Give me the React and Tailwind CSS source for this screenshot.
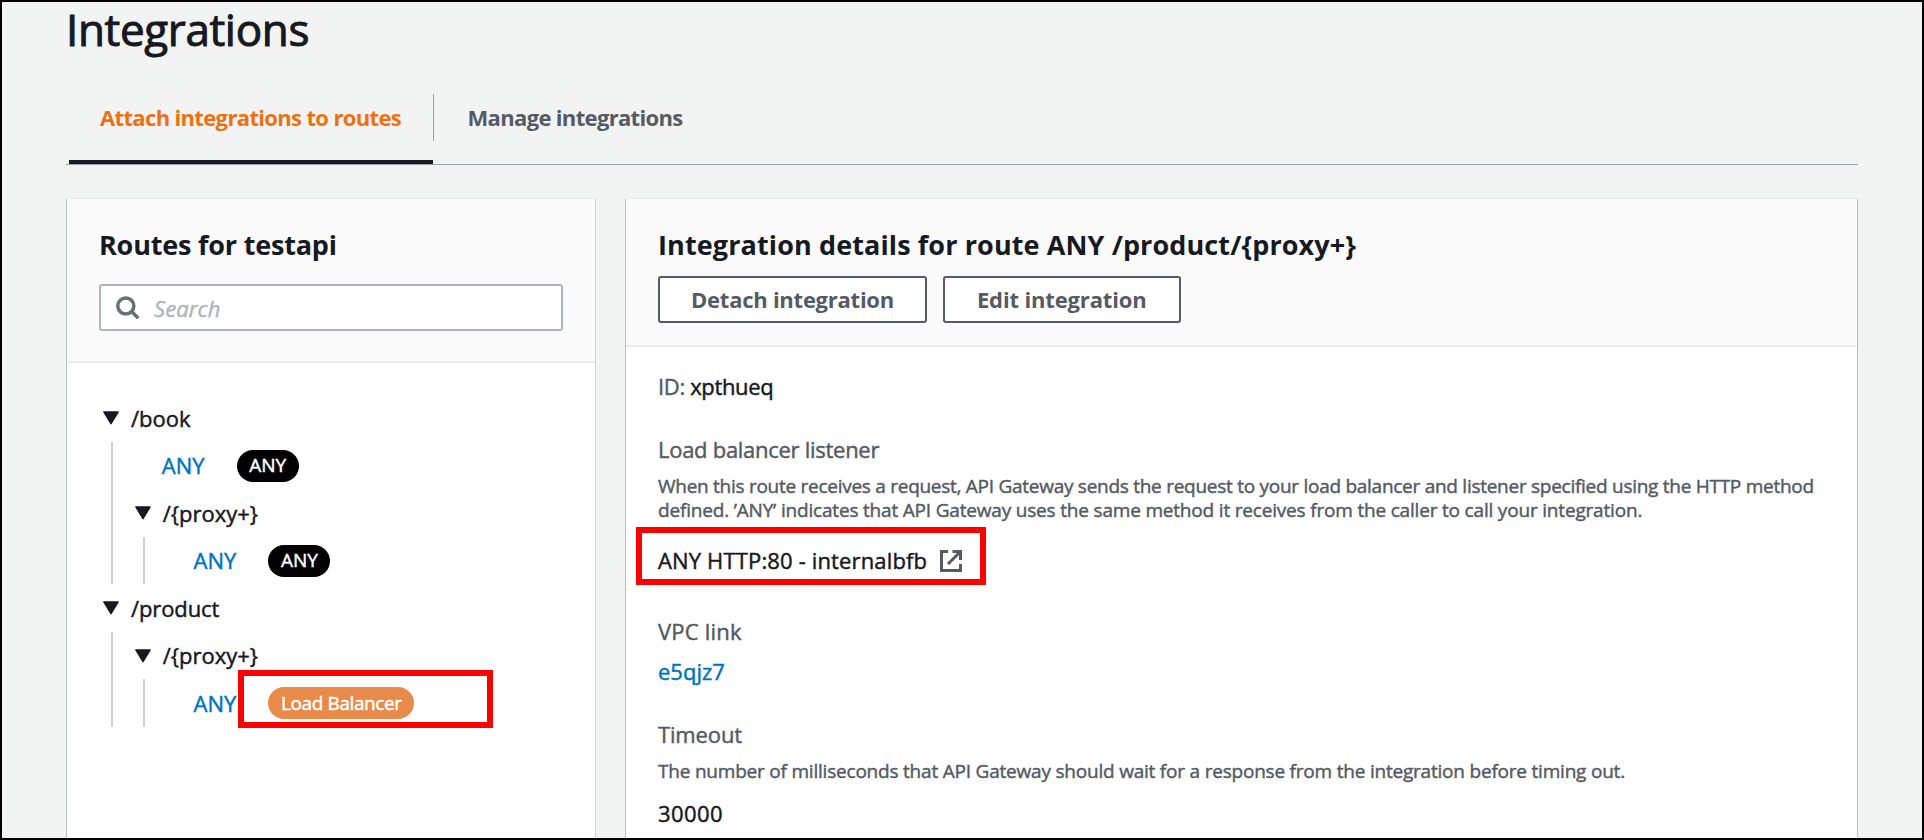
import React from "react";

function Caret() {
  return (
    <svg viewBox="0 0 16 14" className="h-3.5 w-4 shrink-0" fill="#16191f" stroke="#16191f" strokeWidth="1.5" strokeLinejoin="round">
      <path d="M1 1h14L8 12.6z" />
    </svg>
  );
}

function Branch({ label, labelClass, children }) {
  return (
    <div>
      <div className="flex h-[47.5px] items-center gap-3">
        <Caret />
        <span className={labelClass}>{label}</span>
      </div>
      <div className="ml-2 border-l-2 border-[#d0d3d4] pl-[21.7px]">{children}</div>
    </div>
  );
}

function Method({ children }) {
  return (
    <div className="flex h-[47.5px] items-center pl-[27px]">
      <a className="w-[75px] tracking-[0.1px] text-[#0073bb]">ANY</a>
      {children}
    </div>
  );
}

function AnyPill() {
  return (
    <span className="flex h-8 w-[62px] items-center justify-center rounded-full bg-black text-[19px] tracking-[-0.1px] text-white">
      ANY
    </span>
  );
}

function SearchIcon() {
  return (
    <svg viewBox="0 0 24 24" className="size-6" fill="none" stroke="#687078" strokeWidth="3.5">
      <circle cx="9.8" cy="10" r="8" />
      <path d="M15.3 15.3l7 7" />
    </svg>
  );
}

function ExternalIcon() {
  return (
    <svg viewBox="0 0 22 22" className="mt-px size-[22px]" fill="none" stroke="#545b64" strokeWidth="3">
      <path d="M8 1.5H1.5v19h19V14" />
      <path d="M12.5 1.5h8v8.5M20 2L8 14" />
    </svg>
  );
}

export default function App() {
  return (
    <div className="flex h-[840px] w-[1924px] flex-col overflow-hidden border-2 border-black bg-[#f2f3f3] pr-16 pl-16 font-['Open_Sans','Noto_Sans',sans-serif] text-[22px] text-[#16191f] [-webkit-text-stroke:0.45px]">
      <h1 className="mt-px h-[52px] text-[44px] leading-[52px] tracking-[-0.35px] whitespace-nowrap [-webkit-text-stroke:1px]">Integrations</h1>

      <div className="mt-[39px] flex h-[71px] shrink-0 border-b border-[#95a3a4] font-bold [-webkit-text-stroke:0]">
        <div className="ml-[2.5px] flex w-[365.5px] flex-col justify-between">
          <div className="flex h-[47px] items-center border-r border-[#95a3a4] pl-[31.5px] tracking-[-0.65px] whitespace-nowrap text-[#ec7211]">
            Attach integrations to routes
          </div>
          <div className="h-1 w-[364.5px] bg-[#16191f]" />
        </div>
        <div className="flex h-[47px] items-center pl-[33.5px] tracking-[-0.66px] whitespace-nowrap text-[#545b64]">
          Manage integrations
        </div>
      </div>

      <div className="mt-[33px] flex flex-1 justify-between">
        <section className="w-[530px] border border-t-[#eaeded] border-r-[#cfd5d6] border-b-0 border-l-[#b9c2c3] bg-white">
          <header className="h-[164px] border-b-2 border-[#eaeded] bg-[#fafafa] px-8 pt-7">
            <h2 className="text-[27px] leading-9 font-bold tracking-[-0.2px] [-webkit-text-stroke:0]">Routes for testapi</h2>
            <div className="mt-[21px] flex h-[47px] items-center gap-[14px] rounded-[3px] border-2 border-[#aab7b8] bg-white pt-px pl-[15px]">
              <SearchIcon />
              <span className="tracking-[0.1px] text-[#aab7b8] italic">Search</span>
            </div>
          </header>
          <div className="pt-[31.3px] pl-9">
            <Branch label="/book">
              <Method><AnyPill /></Method>
              <Branch label="/{proxy+}">
                <Method><AnyPill /></Method>
              </Branch>
            </Branch>
            <Branch label="/product" labelClass="tracking-[-0.1px]">
              <Branch label="/{proxy+}">
                <Method>
                  <span className="relative flex h-8 w-[146px] items-center justify-center rounded-full bg-[#e88b4a] text-[19px] tracking-[-0.4px] whitespace-nowrap text-white">
                    Load Balancer
                    <span className="absolute top-[-17.5px] left-[-30px] h-[58px] w-[255px] border-6 border-[#ff0000]" />
                  </span>
                </Method>
              </Branch>
            </Branch>
          </div>
        </section>

        <section className="w-[1233px] border border-t-[#eaeded] border-r-[#b9c2c3] border-b-0 border-l-[#b9c2c3] bg-white">
          <header className="h-[148px] border-b-2 border-[#eaeded] bg-[#fafafa] px-8 pt-7 [-webkit-text-stroke:0]">
            <h2 className="text-[27px] leading-9 font-bold tracking-[0.11px]">
              Integration details for route ANY /product/{"{proxy+}"}
            </h2>
            <div className="mt-[13px] flex gap-4 font-bold text-[#545b64]">
              <button className="h-[47px] w-[269px] rounded-[3px] border-2 border-[#545b64] bg-white tracking-[-0.25px]">
                Detach integration
              </button>
              <button className="h-[47px] w-[237.5px] rounded-[3px] border-2 border-[#545b64] bg-white tracking-[-0.15px]">
                Edit integration
              </button>
            </div>
          </header>
          <div className="px-8 pt-6 leading-[30px]">
            <p className="tracking-[-0.35px]">
              <span className="text-[#545b64]">ID:</span> xpthueq
            </p>
            <p className="mt-[33px] tracking-[-0.28px] text-[#545b64]">Load balancer listener</p>
            <p className="mt-[10px] text-[19px] leading-6 tracking-[-0.27px] whitespace-nowrap text-[#545b64]">
              When this route receives a request, API Gateway sends the request to your load balancer and listener specified using the HTTP method
              <br />
              <span className="tracking-[-0.185px]">
                defined. ’ANY’ indicates that API Gateway uses the same method it receives from the caller to call your integration.
              </span>
            </p>
            <div className="relative mt-[23px] flex items-center gap-3">
              <span className="w-[270px] tracking-[0.15px] whitespace-nowrap">ANY HTTP:80 - internalbfb</span>
              <ExternalIcon />
              <span className="absolute top-[-18px] left-[-22px] h-[58px] w-[350px] border-6 border-[#ff0000]" />
            </div>
            <p className="mt-[41px] tracking-[0.2px] text-[#545b64]">VPC link</p>
            <p className="mt-2.5 text-[#0073bb]">e5qjz7</p>
            <p className="mt-[33px] tracking-[-0.15px] text-[#545b64]">Timeout</p>
            <p className="mt-[10px] text-[19px] leading-6 tracking-[-0.208px] whitespace-nowrap text-[#545b64]">
              The number of milliseconds that API Gateway should wait for a response from the integration before timing out.
            </p>
            <p className="mt-[15px] tracking-[0.4px]">30000</p>
          </div>
        </section>
      </div>
    </div>
  );
}
